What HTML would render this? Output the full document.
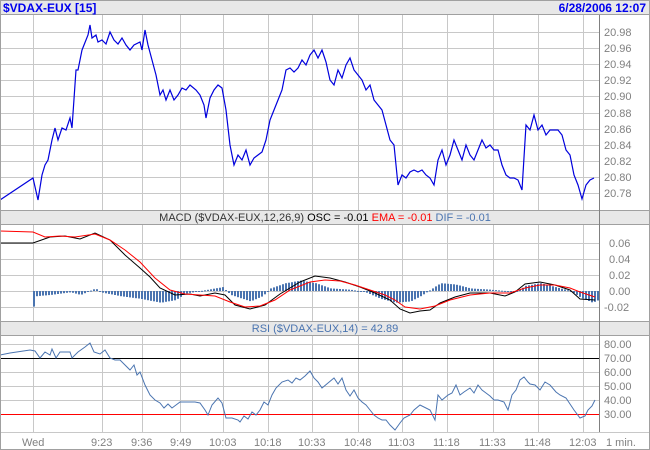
<!DOCTYPE html>
<html><head><style>
body{margin:0;background:#fff;}
svg{display:block;font-family:"Liberation Sans",sans-serif;}
</style></head><body>
<svg width="650" height="450" viewBox="0 0 650 450" xmlns="http://www.w3.org/2000/svg">
<rect x="0" y="0" width="650" height="450" fill="#fff"/>
<rect x="0" y="0" width="650" height="14" fill="#e8e8e8"/>
<line x1="0" y1="14.5" x2="650" y2="14.5" stroke="#a0a0a0"/>
<text x="3" y="12" font-size="12" font-weight="bold" fill="#0000ee">$VDAX-EUX [15]</text>
<text x="646" y="12" font-size="12" font-weight="bold" fill="#0000ee" text-anchor="end">6/28/2006 12:07</text>
<g stroke="#c8c8c8" stroke-width="1">
<line x1="33.5" y1="15" x2="33.5" y2="432"/><line x1="102.5" y1="15" x2="102.5" y2="432"/>
<line x1="142.5" y1="15" x2="142.5" y2="432"/><line x1="180.5" y1="15" x2="180.5" y2="432"/>
<line x1="223.5" y1="15" x2="223.5" y2="432"/><line x1="268.5" y1="15" x2="268.5" y2="432"/>
<line x1="312.5" y1="15" x2="312.5" y2="432"/><line x1="358.5" y1="15" x2="358.5" y2="432"/>
<line x1="402.5" y1="15" x2="402.5" y2="432"/><line x1="447.5" y1="15" x2="447.5" y2="432"/>
<line x1="493.5" y1="15" x2="493.5" y2="432"/><line x1="538.5" y1="15" x2="538.5" y2="432"/>
<line x1="583.5" y1="15" x2="583.5" y2="432"/>
</g>
<g stroke="#c8c8c8">
<line x1="0" y1="32.5" x2="599" y2="32.5"/><line x1="0" y1="48.5" x2="599" y2="48.5"/>
<line x1="0" y1="64.5" x2="599" y2="64.5"/><line x1="0" y1="80.5" x2="599" y2="80.5"/>
<line x1="0" y1="96.5" x2="599" y2="96.5"/><line x1="0" y1="113.5" x2="599" y2="113.5"/>
<line x1="0" y1="129.5" x2="599" y2="129.5"/><line x1="0" y1="145.5" x2="599" y2="145.5"/>
<line x1="0" y1="161.5" x2="599" y2="161.5"/><line x1="0" y1="177.5" x2="599" y2="177.5"/>
<line x1="0" y1="193.5" x2="599" y2="193.5"/>
<line x1="0" y1="243.5" x2="599" y2="243.5"/><line x1="0" y1="259.5" x2="599" y2="259.5"/>
<line x1="0" y1="275.5" x2="599" y2="275.5"/><line x1="0" y1="291.5" x2="599" y2="291.5"/>
<line x1="0" y1="307.5" x2="599" y2="307.5"/>
<line x1="0" y1="344.5" x2="599" y2="344.5"/><line x1="0" y1="372.5" x2="599" y2="372.5"/>
<line x1="0" y1="386.5" x2="599" y2="386.5"/><line x1="0" y1="400.5" x2="599" y2="400.5"/>
</g>
<g font-size="11" fill="#808080">
<text x="604" y="36">20.98</text><text x="604" y="52">20.96</text><text x="604" y="68">20.94</text>
<text x="604" y="84">20.92</text><text x="604" y="100">20.90</text><text x="604" y="117">20.88</text>
<text x="604" y="133">20.86</text><text x="604" y="149">20.84</text><text x="604" y="165">20.82</text>
<text x="604" y="181">20.80</text><text x="604" y="197">20.78</text>
<text x="609" y="247">0.06</text><text x="609" y="263">0.04</text><text x="609" y="279">0.02</text>
<text x="609" y="295">0.00</text><text x="604" y="311">-0.02</text>
<text x="604" y="348">80.00</text><text x="604" y="362">70.00</text><text x="604" y="376">60.00</text>
<text x="604" y="390">50.00</text><text x="604" y="404">40.00</text><text x="604" y="418">30.00</text>
<text x="22" y="446">Wed</text><text x="91" y="446">9:23</text><text x="131" y="446">9:36</text>
<text x="170" y="446">9:49</text><text x="209" y="446">10:03</text><text x="254" y="446">10:18</text>
<text x="298" y="446">10:33</text><text x="344" y="446">10:48</text><text x="388" y="446">11:03</text>
<text x="433" y="446">11:18</text><text x="479" y="446">11:33</text><text x="524" y="446">11:48</text>
<text x="569" y="446">12:03</text><text x="606" y="446">1 min.</text>
</g>
<polyline fill="none" stroke="#0000dd" stroke-width="1.2" points="0,200 33,178 38,200 42,175 45,165 48,160 52,140 55,128 58,140 62,128 66,130 70,118 72,128 76,70 78,70 82,50 84,45 88,35 90,25 92,38 96,35 98,42 102,40 106,44 110,32 114,40 118,44 122,38 126,45 130,50 134,45 140,42 142,50 145,30 148,45 152,60 156,75 160,95 163,90 166,100 170,90 174,100 178,95 182,88 186,90 190,85 196,90 200,95 204,105 206,118 210,98 214,90 218,85 222,88 226,110 230,145 234,165 238,155 242,160 246,150 250,165 254,158 258,155 262,152 266,140 270,120 274,110 278,100 282,90 286,70 290,68 294,72 298,68 302,60 306,65 310,55 314,50 318,58 322,50 326,62 330,80 334,85 338,70 342,78 346,65 350,58 354,70 358,75 362,80 366,90 370,85 374,100 378,105 382,110 386,125 390,140 394,145 398,185 402,175 406,178 410,172 414,170 418,172 422,170 426,175 430,178 434,185 438,160 442,150 446,165 450,155 454,140 458,150 462,160 466,145 470,155 474,160 478,150 482,140 486,148 490,145 494,150 498,150 502,165 506,175 510,178 514,178 518,180 522,190 526,125 530,130 534,115 538,130 542,125 546,135 550,130 554,130 558,130 562,135 566,150 570,155 574,175 578,185 582,199 586,185 590,180 594,178"/>
<rect x="0" y="210" width="650" height="14" fill="#e8e8e8"/>
<line x1="0" y1="210.5" x2="650" y2="210.5" stroke="#a0a0a0"/>
<line x1="0" y1="224.5" x2="650" y2="224.5" stroke="#a0a0a0"/>
<text x="325" y="221" font-size="11" text-anchor="middle"><tspan fill="#333">MACD ($VDAX-EUX,12,26,9) </tspan><tspan fill="#000">OSC = -0.01 </tspan><tspan fill="#ff0000">EMA = -0.01 </tspan><tspan fill="#4a74b0">DIF = -0.01</tspan></text>
<g id="hist" fill="#4a74b0"></g>
<polyline fill="none" stroke="#000" points="0,243 33,243 50,237 65,236 80,239 95,233 110,240 125,255 140,268 150,277 160,288 175,295 190,294 200,296 215,293 225,295 235,305 250,309 265,305 280,294 300,282 315,276 330,278 345,282 360,287 375,293 390,300 400,309 410,313 420,311 430,310 440,303 455,297 470,293 490,293 505,296 515,292 525,284 540,282 555,285 570,290 580,299 595,300"/>
<polyline fill="none" stroke="#ff0000" points="0,231 33,232 45,237 60,236 75,237 95,234 110,240 125,250 140,262 155,278 170,290 185,294 200,295 215,296 230,302 245,307 260,306 275,300 290,290 310,282 325,280 340,281 355,285 370,290 385,295 395,300 405,307 420,309 435,306 450,300 470,295 490,293 510,293 525,288 540,285 555,285 570,288 580,292 595,297"/>
<rect x="0" y="321" width="650" height="14" fill="#e8e8e8"/>
<line x1="0" y1="321.5" x2="650" y2="321.5" stroke="#a0a0a0"/>
<line x1="0" y1="335.5" x2="650" y2="335.5" stroke="#a0a0a0"/>
<text x="325" y="332" font-size="11" fill="#4a74b0" text-anchor="middle">RSI ($VDAX-EUX,14) = 42.89</text>
<line x1="0" y1="358.5" x2="599" y2="358.5" stroke="#000"/>
<line x1="0" y1="414.5" x2="599" y2="414.5" stroke="#ff0000"/>
<polyline fill="none" stroke="#4a74b0" points="0,355 10,353 30,350 35,351 40,358 45,352 50,355 52,349 56,358 60,352 70,352 72,358 78,352 85,347 90,343 94,352 100,354 105,350 110,358 115,360 120,360 125,365 130,370 134,365 137,375 140,372 145,385 150,395 155,400 160,403 164,408 168,404 172,408 176,405 180,402 185,402 190,402 195,402 200,403 205,410 208,415 212,405 218,398 222,403 226,418 232,418 238,420 240,422 244,416 248,419 252,412 256,415 260,410 264,402 268,405 272,395 276,388 282,382 288,380 292,383 296,378 300,380 305,376 310,371 314,378 318,382 322,388 328,383 334,378 338,384 342,378 346,390 350,396 354,390 358,398 362,402 366,405 370,410 374,415 378,418 382,420 386,420 390,425 395,430 400,423 404,418 410,415 414,410 420,405 430,410 435,420 438,395 442,400 448,395 452,393 456,385 460,395 464,392 470,388 474,393 478,385 482,390 486,393 490,396 494,400 498,400 504,402 508,410 512,395 516,390 520,380 524,377 528,382 530,384 535,385 540,390 545,382 550,385 556,392 560,395 566,398 570,404 574,410 580,418 585,416 588,410 592,406 595,400"/>
<line x1="0" y1="432.5" x2="650" y2="432.5" stroke="#c8c8c8"/>
<line x1="599.5" y1="15" x2="599.5" y2="432" stroke="#808080"/>
<rect x="0.5" y="0.5" width="649" height="449" fill="none" stroke="#a0a0a0"/>
</svg>
<script>
var g=document.getElementById('hist');
var k=[[33,-12],[36,-4],[50,-3],[70,-1],[80,-3],[95,2],[100,-1],[120,-4],[140,-6],[160,-9],[175,-7],[185,-2],[200,0],[215,2],[222,3],[230,-3],[250,-8],[262,-4],[270,2],[285,6],[300,8],[315,6],[330,2],[350,1],[365,-1],[380,-6],[395,-9],[410,-8],[420,-4],[432,2],[440,6],[455,5],[470,2],[490,1],[505,0],[515,-1],[525,4],[540,6],[555,3],[570,0],[580,-5],[592,-9],[598,-7]];
function v(x){for(var i=0;i<k.length-1;i++){if(x>=k[i][0]&&x<=k[i+1][0]){var t=(x-k[i][0])/(k[i+1][0]-k[i][0]);return k[i][1]+t*(k[i+1][1]-k[i][1]);}}return 0;}
var s='';for(var x=33;x<=597;x+=3){var h=v(x)*1.3;var y=h>0?291-h:291;s+='<rect x="'+x+'" y="'+y.toFixed(1)+'" width="2" height="'+Math.max(Math.abs(h),1).toFixed(1)+'"/>';}
g.innerHTML=s;
</script>
</body></html>
